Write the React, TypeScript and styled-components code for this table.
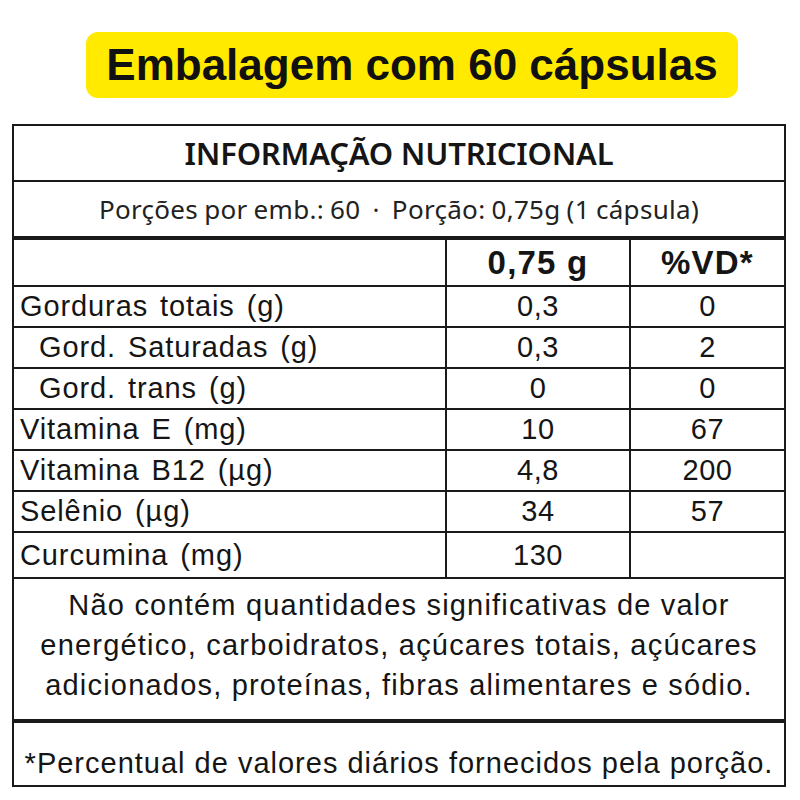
import React from 'react'
import styled, { createGlobalStyle } from 'styled-components'

const GlobalStyle = createGlobalStyle`
  body {
    margin: 0;
    background: #fff;
    font-family: "Liberation Sans", Arial, sans-serif;
    color: #151515;
  }
`;

type Row = { label: string; amount: string; vd: string; sub?: boolean; tall?: boolean };

const rows: Row[] = [
  { label: 'Gorduras totais (g)', amount: '0,3', vd: '0' },
  { label: 'Gord. Saturadas (g)', amount: '0,3', vd: '2', sub: true },
  { label: 'Gord. trans (g)', amount: '0', vd: '0', sub: true },
  { label: 'Vitamina E (mg)', amount: '10', vd: '67' },
  { label: 'Vitamina B12 (µg)', amount: '4,8', vd: '200' },
  { label: 'Selênio (µg)', amount: '34', vd: '57' },
  { label: 'Curcumina (mg)', amount: '130', vd: '', tall: true },
];

const App = () => {
  return (
    <Page>
      <GlobalStyle />
      <BadgeZone>
        <Badge>Embalagem com 60 cápsulas</Badge>
      </BadgeZone>
      <Label>
        <TitleRow>INFORMAÇÃO NUTRICIONAL</TitleRow>
        <ServingRow>Porções por emb.: 60 &nbsp;·&nbsp; Porção: 0,75g (1 cápsula)</ServingRow>
        <GridRow $height={47}>
          <Cell />
          <HeadCell>0,75 g</HeadCell>
          <HeadCell>%VD*</HeadCell>
        </GridRow>
        {rows.map((r) => (
          <GridRow key={r.label} $height={r.tall ? 46 : 41}>
            <NameCell $sub={r.sub}>{r.label}</NameCell>
            <ValueCell>{r.amount}</ValueCell>
            <ValueCell>{r.vd}</ValueCell>
          </GridRow>
        ))}
        <Notes>
          Não contém quantidades significativas de valor<br />
          energético, carboidratos, açúcares totais, açúcares<br />
          adicionados, proteínas, fibras alimentares e sódio.
        </Notes>
        <Footer>*Percentual de valores diários fornecidos pela porção.</Footer>
      </Label>
    </Page>
  )
}

export default App

const Page = styled.div`
  width: 800px;
  height: 800px;
  padding-top: 32px;
  box-sizing: border-box;
`;

const BadgeZone = styled.div`
  display: flex;
  justify-content: center;
  padding-left: 24px;
`;

const Badge = styled.div`
  display: flex;
  align-items: center;
  justify-content: center;
  width: 652px;
  height: 66px;
  background: #ffea00;
  border-radius: 12px;
  font-family: "Liberation Sans", Arial, sans-serif;
  font-weight: 700;
  font-size: 44px;
  color: #111;
`;

const Label = styled.div`
  margin: 26px 0 0 12px;
  width: 774px;
  border: 2px solid #1a1a1a;
  box-sizing: border-box;
`;

const TitleRow = styled.div`
  height: 54px;
  display: flex;
  align-items: center;
  justify-content: center;
  border-bottom: 2px solid #1a1a1a;
  font-family: "Noto Sans", sans-serif;
  font-weight: 600;
  font-size: 31px;
  letter-spacing: -0.2px;
`;

const ServingRow = styled.div`
  height: 54px;
  display: flex;
  align-items: center;
  justify-content: center;
  border-bottom: 4px solid #1a1a1a;
  font-family: "Noto Sans", sans-serif;
  font-size: 26px;
  letter-spacing: 0.3px;
  word-spacing: -1px;
  color: #222;
`;

const GridRow = styled.div<{ $height: number }>`
  display: grid;
  grid-template-columns: 431px 184px 1fr;
  height: ${(p) => p.$height}px;
  border-bottom: 2px solid #1a1a1a;
  box-sizing: border-box;
`;

const Cell = styled.div`
  display: flex;
  align-items: center;
  & + & {
    border-left: 2px solid #1a1a1a;
  }
`;

const HeadCell = styled(Cell)`
  justify-content: center;
  font-weight: 700;
  font-size: 33px;
  letter-spacing: 1.2px;
`;

const NameCell = styled(Cell)<{ $sub?: boolean }>`
  padding-left: ${(p) => (p.$sub ? 25 : 6)}px;
  font-size: 29px;
  letter-spacing: 0.9px;
  word-spacing: 3px;
`;

const ValueCell = styled(Cell)`
  justify-content: center;
  font-size: 29px;
  letter-spacing: 0.6px;
`;

const Notes = styled.div`
  padding: 6px 0 14px;
  text-align: center;
  font-size: 29px;
  line-height: 40px;
  letter-spacing: 1.2px;
  border-bottom: 4px solid #1a1a1a;
`;

const Footer = styled.div`
  padding: 22px 0 4px;
  text-align: center;
  font-size: 29px;
  line-height: 36px;
  letter-spacing: 1px;
`;
